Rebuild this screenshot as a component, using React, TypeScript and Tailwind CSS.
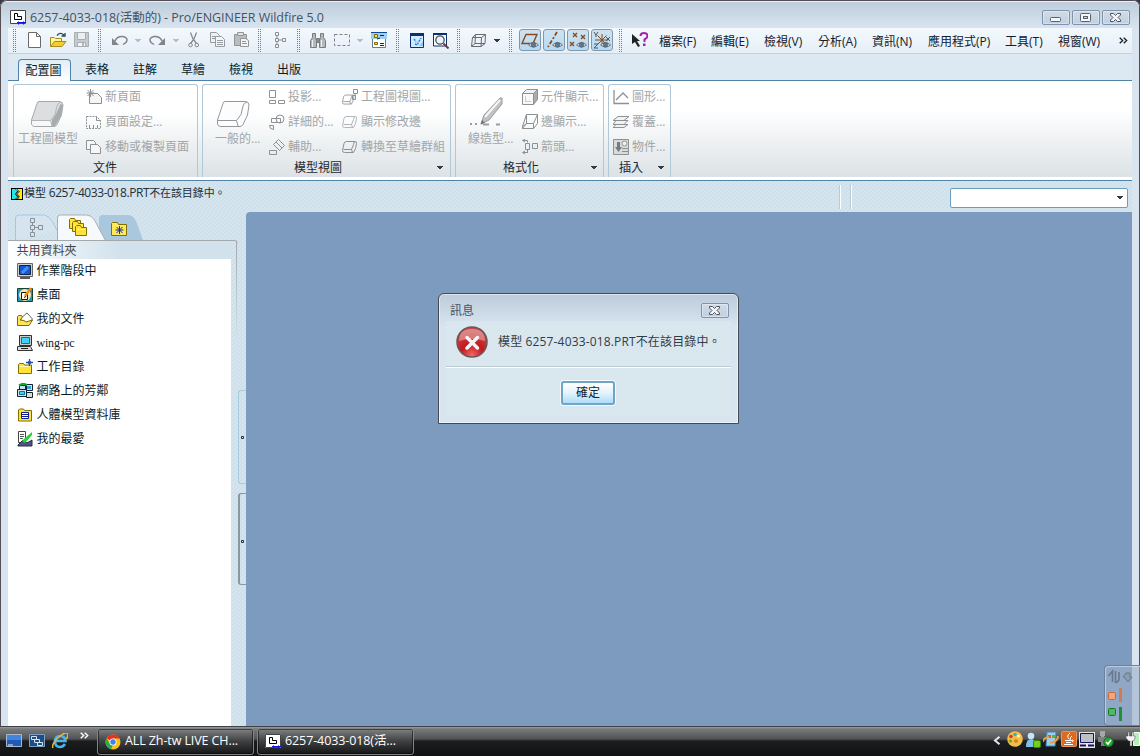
import type { ReactNode } from "react";

type SvgProps = { w?: number; h?: number; children: ReactNode; stroke?: string; smooth?: boolean; className?: string };

function Svg({ w = 16, h = 16, children, stroke = "#8d9193", smooth, className = "" }: SvgProps) {
  return (
    <svg
      width={w}
      height={h}
      viewBox={`0 0 ${w} ${h}`}
      fill="none"
      stroke={stroke}
      shapeRendering={smooth ? "auto" : "crispEdges"}
      className={`shrink-0 ${className}`}
    >
      {children}
    </svg>
  );
}

const hatch = "bg-[repeating-linear-gradient(135deg,#cddfea_0px,#cddfea_1.6px,#d7e5ee_1.6px,#d7e5ee_2.83px)]";

function Grip() {
  return (
    <Svg w={3} h={24} stroke="none">
      {Array.from({ length: 12 }, (_, i) => (
        <g key={i} fill="#5587ab">
          <rect x="0" y={i * 2} width="1" height="1" />
          <rect x="2" y={i * 2} width="1" height="1" />
        </g>
      ))}
    </Svg>
  );
}

function Arrow({ color = "#303a44" }: { color?: string }) {
  return (
    <Svg w={7} h={4} stroke="none">
      <path d="M0 0h6v1h-1v1h-1v1h-2v-1h-1v-1h-1z" fill={color} />
    </Svg>
  );
}

function Slot({ w, children }: { w: string; children: ReactNode }) {
  return <div className={`flex h-full shrink-0 items-center whitespace-nowrap ${w}`}>{children}</div>;
}

function Eye() {
  return (
    <g>
      <path d="M7.500 14q5-5 10 0q-5 4-10 0z" fill="#e8eef2" stroke="#777" strokeWidth="1" />
      <circle cx="12.500" cy="13.800" r="2.400" fill="#55789c" stroke="#555" strokeWidth=".6" />
    </g>
  );
}

function Toggle({ children, last }: { children: ReactNode; last?: boolean }) {
  return (
    <div className={`flex h-full shrink-0 items-start pt-px ${last ? "w-[28px]" : "w-[24px]"}`}>
      <div className="flex h-[22px] w-[22px] items-center justify-center rounded-[3px] border border-[#7f98ad] bg-linear-to-b from-[#cfe3f1] to-[#b4daf4]">
        <Svg w={18} h={18} stroke="#8c4a1c" smooth>
          {children}
          <Eye />
        </Svg>
      </div>
    </div>
  );
}

const menus: [string, string][] = [
  ["檔案(F)", "w-[52px]"],
  ["編輯(E)", "w-[53px]"],
  ["檢視(V)", "w-[54px]"],
  ["分析(A)", "w-[54px]"],
  ["資訊(N)", "w-[56px]"],
  ["應用程式(P)", "w-[77px]"],
  ["工具(T)", "w-[53px]"],
  ["視窗(W)", "w-[61px]"],
];

function AppLogo() {
  return (
    <Svg stroke="none" smooth>
      <rect width="16" height="14" fill="#fff" />
      <path d="M.5.5h15v13H.5z" stroke="#444" />
      <path d="M4.500 3.500h3v3h4v3h-7z" stroke="#000" />
      <path d="M7 12.500h9M8.500 11.500v3M13.500 11.500v3" stroke="#1414e0" />
    </Svg>
  );
}

function WinButton({ children }: { children: ReactNode }) {
  return (
    <div className="flex h-[15px] w-[28px] items-center justify-center rounded-[2px] border border-[#7f93ab] bg-linear-to-b from-[#d0dbe7] to-[#c1cfdf] shadow-[inset_0_0_0_1px_rgba(255,255,255,0.35)]">
      {children}
    </div>
  );
}

function CloseGlyph() {
  return (
    <Svg w={11} h={9} smooth stroke="none" className="-ml-px">
      <path d="M.5.5h3l2 2 2-2h3v1.500L8 4.500l2.500 2.500v1.500h-3l-2-2-2 2h-3V7L3 4.500.5 2z" fill="#f2f4f6" stroke="#4d5563" />
    </Svg>
  );
}

function TitleBar() {
  return (
    <div className="flex h-[28px] shrink-0 items-center bg-linear-to-b from-[#bccbdb] to-[#d8e4f0] pr-[10px] pl-[10px]">
      <div className="mt-[7px]">
        <AppLogo />
      </div>
      <div className="mt-[8px] ml-[4px] flex-1 text-[12.5px] leading-none tracking-[-0.04px] whitespace-nowrap text-[#46525f]">
        6257-4033-018(活動的) - Pro/ENGINEER Wildfire 5.0
      </div>
      <div className="mt-[6px] flex gap-[2px]">
        <WinButton>
          <Svg w={12} h={5} smooth className="mt-[5px] -ml-px">
            <rect x=".5" y=".5" width="10" height="4" rx="1" fill="#f4f6f8" stroke="#5a6270" />
          </Svg>
        </WinButton>
        <WinButton>
          <Svg w={12} h={9} stroke="#5a6270" smooth className="-ml-px">
            <rect x=".5" y=".5" width="10" height="8" rx="1" fill="#f4f6f8" />
            <rect x="3.500" y="3.500" width="4" height="2" fill="#c4d0de" />
          </Svg>
        </WinButton>
        <WinButton>
          <CloseGlyph />
        </WinButton>
      </div>
    </div>
  );
}

function Toolbar() {
  return (
    <div className="flex h-[26px] shrink-0 items-center border-b border-[#c3d2df] bg-linear-to-b from-[#f3f9fd] to-[#e6eef6] pl-[5px] text-[12px] text-[#10202c]">
      <Slot w="w-[15px]"><Grip /></Slot>
      <Slot w="w-[22px]">
        <Svg w={13} h={16} stroke="#6b6b6b" smooth className="-mt-px"><path d="M.5.5h8l4 4v11H.5zM8.500.5v4h4" fill="#fff" /></Svg>
      </Slot>
      <Slot w="w-[24px]">
        <Svg w={17} h={16} stroke="#a58c1e" smooth className="-mt-px">
          <path d="M.5 14.500v-9h4l1 1h6v3" fill="#fff3a0" />
          <path d="M.5 14.500l4-5h11.500l-4 5z" fill="#f6cf2e" />
          <path d="M7 3.500q3-4 7-.5M15 1v3h-3.500" stroke="#28445a" strokeWidth="1.300" />
        </Svg>
      </Slot>
      <Slot w="w-[24px]">
        <Svg stroke="#a8adb1" smooth className="-mt-px"><path d="M.5.5h14v14h-14z" fill="#c5cacd" /><path d="M3.500.5h8v7h-8z" fill="#eceff1" /><path d="M3.500 10.500h8v4h-8z" fill="#f5f6f7" /><path d="M8 11h2v3H8z" fill="#b4b8bb" stroke="none" /></Svg>
      </Slot>
      <Slot w="w-[14px]"><Grip /></Slot>
      <Slot w="w-[23px]">
        <Svg smooth stroke="#7f8487" className="-mt-px"><path d="M3 9q2-5 8-4.500q6 1.500 3 6l-3 2" strokeWidth="1.500" /><path d="M0 6v7h7z" fill="#7f8487" stroke="none" /></Svg>
      </Slot>
      <Slot w="w-[14px]"><Arrow color="#b8bec2" /></Slot>
      <Slot w="w-[24px]">
        <Svg smooth stroke="#7f8487" className="-mt-px"><path d="M13 9q-2-5-8-4.500q-6 1.500-3 6l3 2" strokeWidth="1.500" /><path d="M16 6v7H9z" fill="#7f8487" stroke="none" /></Svg>
      </Slot>
      <Slot w="w-[15px]"><Arrow color="#b8bec2" /></Slot>
      <Slot w="w-[22px]">
        <Svg w={12} smooth stroke="#85898c" className="-mt-px"><path d="M2.500.5L5 7l3.500 4.500M8.500.5L6 7l-3.500 4.500" strokeWidth="1.300" /><circle cx="2.500" cy="13" r="1.800" /><circle cx="8.800" cy="13" r="1.800" /></Svg>
      </Slot>
      <Slot w="w-[24px]">
        <Svg stroke="#969b9e" smooth className="-mt-px"><path d="M.5.5h6l3 3v7h-9z" fill="#eef0f1" /><path d="M2 4.500h5M2 6.500h5" /><path d="M5.500 4.500h6l3 3v7h-9z" fill="#f4f5f6" /><path d="M7 8.500h6M7 10.500h6M7 12.500h6" /></Svg>
      </Slot>
      <Slot w="w-[24px]">
        <Svg stroke="#909598" smooth className="-mt-px"><path d="M.5 2.500h12v11H.5z" fill="#b9bdbf" /><path d="M3.500.5h6v3h-6z" fill="#dfe1e2" /><path d="M6.500 6.500h5l3 2v6h-8z" fill="#f4f5f6" /><path d="M8 9.500h4M8 11.500h5" /></Svg>
      </Slot>
      <Slot w="w-[16px]"><Grip /></Slot>
      <Slot w="w-[23px]">
        <Svg w={13} stroke="#8b9093" smooth className="-mt-[2px]"><path d="M1.500.5h3v3h-3zM1.500 6.500h3v3h-3zM8.500 6.500h3v3h-3zM1.500 12.500h3v3h-3zM3 4v2M3 10v2M5 8h3" /></Svg>
      </Slot>
      <Slot w="w-[13px]"><Grip /></Slot>
      <Slot w="w-[24px]">
        <Svg stroke="#777c7f" smooth><path d="M2.500.5h3v4l1 3v7h-6v-7l2-3zM10.500.5h3v4l2 3v7h-6v-7l1-3z" fill="#b4b9bc" /><path d="M6.500 5.500h3v4h-3z" fill="#8a8f92" /><path d="M2.500 7v7M11.500 7v7" stroke="#eef0f1" /></Svg>
      </Slot>
      <Slot w="w-[23px]">
        <Svg h={12} stroke="#7d8285" smooth className="-mt-[2px]"><path d="M.5.5h15v11H.5z" strokeDasharray="3 2" /></Svg>
      </Slot>
      <Slot w="w-[14px]"><Arrow color="#b8bec2" /></Slot>
      <Slot w="w-[25px]">
        <Svg stroke="#6d7d8c" smooth className="-mt-[2px]"><path d="M1.500.5h13v15h-13z" fill="#fff" /><path d="M0 1h16v6H0z" fill="#9cd0f2" stroke="none" /><path d="M0 .5h16" stroke="#12489a" /><path d="M3.500 2.500h3v3h-3zM3.500 10.500h3v2h-3z" fill="#ffe83a" stroke="#7a6a00" /><path d="M9 3.500h4M6 7l3-1M9 11.500h4M9 13.500h4" stroke="#222" /></Svg>
      </Slot>
      <Slot w="w-[14px]"><Grip /></Slot>
      <Slot w="w-[23px]">
        <Svg w={15} h={15} stroke="#0b2f73" smooth><path d="M.5.500h13v14H.5z" fill="#d3eaff" /><path d="M0 1.500h14" strokeWidth="3" /><path d="M10 12l3-4v5H9z" fill="#8cc4f4" stroke="none" /><path d="M5 11l2 1 4-7M4 6l2 3" stroke="#1c86d8" strokeWidth="1.500" strokeDasharray="2 1" /></Svg>
      </Slot>
      <Slot w="w-[24px]">
        <Svg smooth stroke="#0b2f73"><path d="M.5 1h13v12H.500z" fill="#fff" /><path d="M0 1h14" strokeWidth="2" /><circle cx="7" cy="7" r="4.200" fill="#e9f3f9" stroke="#48525a" strokeWidth="1.300" /><path d="M10.500 10.500l5 5" stroke="#7b3c28" strokeWidth="2" /></Svg>
      </Slot>
      <Slot w="w-[14px]"><Grip /></Slot>
      <Slot w="w-[23px]">
        <Svg h={14} w={15} smooth stroke="#666b6f"><path d="M1.500 3.500h9l-.5 9H.5zM4.500.5h10l-.5 9H4zM1.500 3.500l3-3M10.500 3.500l4-3M.5 12.500l3.500-3M10 12.500l4-3" /></Svg>
      </Slot>
      <Slot w="w-[15px]"><Arrow /></Slot>
      <Slot w="w-[10px]"><Grip /></Slot>
      <Toggle><path d="M5 3.500h11l-4 9H1z" strokeWidth="1.400" /></Toggle>
      <Toggle><path d="M12 1L3 16" strokeWidth="1.800" strokeDasharray="4 2 2 2" /></Toggle>
      <Toggle><path d="M4 2l4 4M8 2L4 6M12 4l4 4M16 4l-4 4M1 11l4 4M5 11l-4 4" strokeWidth="1.400" /></Toggle>
      <Toggle last><path d="M2 9h13M9 3v11M4.500 4.500l9 9M13.500 4.500l-9 9" /><path d="M1 1l2 3 2-3M3 4v2M13 6l4 4M17 6l-4 4M1 13h4l-4 4h4" stroke="#555" /></Toggle>
      <Slot w="w-[13px]"><Grip /></Slot>
      <Slot w="w-[27px]">
        <Svg smooth stroke="none" className="-mt-[2px]"><path d="M0 2l8 7H5l3 5-2 1-3-5-3 2z" fill="#222" /><path d="M8.500 4q0-3 3.500-3t3.500 3q0 2-3 3.500v2.500" stroke="#a322ac" strokeWidth="2" /><rect x="11" y="11.500" width="2.500" height="2.500" fill="#a322ac" /></Svg>
      </Slot>
      {menus.map(([label, w]) => (
        <Slot key={label} w={w}>
          <span className="pt-[3px]">{label}</span>
        </Slot>
      ))}
      <Svg w={9} h={7} smooth stroke="#14202a"><path d="M.7.700l3 2.800-3 2.800M4.700.7l3 2.800-3 2.800" strokeWidth="1.300" /></Svg>
    </div>
  );
}

function RibbonTabs() {
  return (
    <div className="flex h-[27px] shrink-0 items-end border-b border-[#4f82a8] bg-[#dce9f3] pl-[10px] text-[12px] leading-none whitespace-nowrap text-[#0b1c28]">
      <div className="-mb-px flex h-[22px] w-[53px] items-center justify-center rounded-t-[4px] border border-b-0 border-[#4f82a8] bg-linear-to-b from-[#e1edf5] to-white pr-[2px]">配置圖</div>
      <div className="flex h-[21px] items-center gap-[24px] pl-[14px]">
        {["表格", "註解", "草繪", "檢視", "出版"].map((t) => (
          <span key={t}>{t}</span>
        ))}
      </div>
    </div>
  );
}

function Solid({ filled }: { filled?: boolean }) {
  return (
    <Svg w={34} h={30} smooth stroke={filled ? "#a6a9ab" : "#94989b"}>
      <path d="M8 2.500H28q4 0 4 3.500L30.500 16 26 25.500q-1 2-3 2H4q-3 0-3.500-2.500v-4L6 4.500q.5-2 2-2z" fill={filled ? "#dcdedf" : "#fdfdfd"} />
      {filled && <path d="M29.500 5l2.500 1-1.500 10L24 27h-3v-6l4-6z" fill="#a9acae" stroke="none" />}
      {filled && <path d="M1 21.500h19v5.500H4q-2.500 0-3-2z" fill="#f8f8f8" stroke="none" />}
      <path d="M1 21.500h18.500L24 15.500 26 7q.5-3 4-4M19.500 21.500l1.500 5.500" stroke={filled ? "#b4b7b9" : "#94989b"} />
    </Svg>
  );
}

function Command({ icon, label }: { icon: ReactNode; label: string }) {
  return (
    <div className="flex h-[25px] items-center">
      <div className="flex w-[20px] shrink-0">{icon}</div>
      <span className="-ml-px whitespace-nowrap">{label}</span>
    </div>
  );
}

function Commands({ children, className = "" }: { children: ReactNode; className?: string }) {
  return <div className={`-mt-px flex flex-col ${className}`}>{children}</div>;
}

type GroupProps = { w: string; title: string; titlePad: string; arrow?: string; children: ReactNode };

function Group({ w, title, titlePad, arrow, children }: GroupProps) {
  return (
    <div className={`flex h-[93px] shrink-0 flex-col rounded-t-[3px] border-x border-t border-[#b0c8d8] bg-linear-to-b from-white from-30% to-[#dce2e5] ${w}`}>
      <div className="flex h-[74px] items-start text-[#a1a6a9]">{children}</div>
      <div className={`flex h-[17px] items-center leading-none text-[#1c2730] ${titlePad}`}>
        <span className="whitespace-nowrap">{title}</span>
        {arrow && <span className={arrow}><Arrow /></span>}
      </div>
    </div>
  );
}

const page = <path d="M3.500 4.500h8l4 4v6h-12z" fill="#f6f6f6" />;
const smallBox = <path d="M4.500 2.500h8.500q2 0 1.500 2l-1 5-2 4h-9q-2 0-2-2l1.500-7q.5-2 2.500-2zM1.500 10.500h8l2-5 1-3M9.500 10.500l1 3" />;

function Ribbon() {
  return (
    <div className="flex h-[100px] shrink-0 border-b border-[#4f82a8] bg-white text-[12px] leading-none">
      <div className="flex h-[96px] w-full gap-[4px] bg-linear-to-b from-white from-30% to-[#dce2e5] pt-[3px] pl-[5px]">
        <Group w="w-[185px]" title="文件" titlePad="pl-[79px]">
          <div className="flex w-[72px] flex-col items-start pt-[14px] pl-[4px]">
            <span className="pl-[13px]"><Solid filled /></span>
            <span className="mt-[4px] whitespace-nowrap">工程圖模型</span>
          </div>
          <Commands>
            <Command label="新頁面" icon={<Svg smooth>{page}<path d="M4.500 0v8M.500 4h8M1.500 1l6 6M7.500 1l-6 6" /></Svg>} />
            <Command label="頁面設定..." icon={<Svg smooth><path d="M.5 2.500h10l4 4v8H.5z" strokeDasharray="2 1" /><path d="M10.500 2.500v4h4M3.500 14v-3M7.500 14v-3M11.500 14v-3" /></Svg>} />
            <Command label="移動或複製頁面" icon={<Svg smooth><path d="M.5 1.500h7l2 2v7h-9z" fill="#f6f6f6" /><path d="M4.500 5.500h7l3 3v6h-10z" fill="#f6f6f6" /></Svg>} />
          </Commands>
        </Group>
        <Group w="w-[249px]" title="模型視圖" titlePad="pl-[91px]" arrow="ml-[95px]">
          <div className="flex w-[66px] flex-col items-start pt-[14px] pl-[12px]">
            <span className="pl-[2px]"><Solid /></span>
            <span className="mt-[4px] whitespace-nowrap">一般的...</span>
          </div>
          <Commands className="w-[73px]">
            <Command label="投影..." icon={<Svg smooth><path d="M.5 1.500h6v7h-6zM.5 11.500h6v3h-6zM9.500 11.500h6v3h-6z" /></Svg>} />
            <Command label="詳細的..." icon={<Svg smooth><circle cx="11" cy="5" r="4" /><path d="M2.500 4.500h9v4h-9zM.5 11.500h4v4q-4 0-4-4z" /></Svg>} />
            <Command label="輔助..." icon={<Svg smooth><path d="M9.500.5l6 6-5 5-6-6zM7 3l6 6M.5 11.500h7v4h-7z" /></Svg>} />
          </Commands>
          <Commands>
            <Command label="工程圖視圖..." icon={<Svg smooth><g transform="translate(0 4) scale(.82)">{smallBox}</g><path d="M11.500.5h4v4h-4zM10.500 6.500h3v4h-3zM13 5v2" /></Svg>} />
            <Command label="顯示修改邊" icon={<Svg smooth stroke="#b4b8ba">{smallBox}</Svg>} />
            <Command label="轉換至草繪群組" icon={<Svg smooth>{smallBox}</Svg>} />
          </Commands>
        </Group>
        <Group w="w-[149px]" title="格式化" titlePad="pl-[47px]" arrow="ml-[52px]">
          <div className="flex w-[66px] flex-col items-start pt-[11px] pl-[12px]">
            <Svg w={36} h={33} smooth stroke="none">
              <path d="M32 2h2v6L21 24l-8 4 3-9z" fill="#bfc2c3" stroke="#9a9d9f" />
              <path d="M32 4L17 21" stroke="#f5f5f5" strokeWidth="2" />
              <path d="M12.500 28.500l1.500-4.500 3 3z" fill="#6f7375" />
              <path d="M2 28h2M7 28h2M15 28.500h6M28 28.500h4" stroke="#999da0" strokeWidth="2" />
            </Svg>
            <span className="mt-[4px] whitespace-nowrap">線造型...</span>
          </div>
          <Commands>
            <Command label="元件顯示..." icon={<Svg smooth><path d="M.5 4.500l4-4h11l-4 4z" fill="#f0f1f1" /><path d="M11.500 4.500l4-4v10l-4 5z" fill="#a9adaf" /><path d="M.5 4.500h11v11H.5z" fill="#f8f8f8" /><path d="M3.500 7v6M3 12.500h6" stroke="#c9cccd" /></Svg>} />
            <Command label="邊顯示..." icon={<Svg smooth><path d="M4.500.5h11v9l-4 5H.5v-2zM4.500.5v9h7l4-9M4.500 9.500l-4 5M11.500 9.500v5M.5 12.500l4-3" /></Svg>} />
            <Command label="箭頭..." icon={<Svg smooth><path d="M1 1.500h4.500M1 13.500h4.500M5.500 1.500v2M5.500 11v3M3 0L.5 1.500 3 3M3 12L.5 13.500 3 15M3.500 4.500h4v6h-4zM10.500 4.500h5v5h-5z" /></Svg>} />
          </Commands>
        </Group>
        <Group w="w-[63px]" title="插入" titlePad="pl-[10px]" arrow="ml-[15px]">
          <Commands className="pl-[4px]">
            <Command label="圖形..." icon={<Svg smooth><path d="M1 1v13.500h15M3 11l7-7 5 5" strokeWidth="1.300" /></Svg>} />
            <Command label="覆蓋..." icon={<Svg smooth><path d="M5 2.500h11l-5 4H0zM3 6.500h12l-4 4H0zM3 10.500h12l-4 3H0z" fill="#f1f2f2" /></Svg>} />
            <Command label="物件..." icon={<Svg smooth><path d="M.5.5h15v15H.5z" fill="#d8dadb" /><path d="M4 3h3v5h2l-3.500 5L2 8h2z" fill="#777b7e" stroke="none" /><circle cx="11.500" cy="4.500" r="2.500" fill="#f1f1f1" /><path d="M9 9.500h6M9 12.500h6" /></Svg>} />
          </Commands>
        </Group>
      </div>
    </div>
  );
}

function MessageBar() {
  return (
    <div className={`flex h-[31px] shrink-0 items-start pr-[4px] pl-[3px] ${hatch}`}>
      <Svg w={12} h={12} smooth stroke="none" className="mt-[7px]">
        <rect width="12" height="12" fill="#000" />
        <path d="M1 1h3l2.500 2L4 6l2.500 3L4 11H1z" fill="#22e8e8" />
        <path d="M6 1h5v10H7l2-2.500L6.500 6 9 3.500z" fill="#fff200" />
        <path d="M5 1l3 2.500L5.500 6 8 8.500 5.500 11" stroke="#fff" strokeWidth=".7" />
      </Svg>
      <span className="mt-[6px] ml-px w-[815px] text-[11px] leading-none whitespace-nowrap text-[#23303a]">
        模型<span className="text-[12px] tracking-[-0.42px]"> 6257-4033-018.PRT</span><span className="tracking-[-0.1px]">不在該目錄中。</span>
      </span>
      <span className="mt-[4px] h-[24px] w-[2px] border-r border-l border-r-white border-l-[#b9cbd8]" />
      <span className="mt-[4px] ml-[9px] h-[24px] w-[2px] border-r border-l border-r-white border-l-[#b9cbd8]" />
      <div className="mt-[7px] ml-auto flex h-[20px] w-[178px] items-center justify-end rounded-[2px] border border-[#6b9fbf] bg-white pr-[3px]">
        <Arrow />
      </div>
    </div>
  );
}

function Folder({ x = 0, y = 0 }: { x?: number; y?: number }) {
  return (
    <g transform={`translate(${x} ${y})`}>
      <path d="M.5 10.500v-9l1-1h4l1 2h5v8z" fill="#ffe33a" stroke="#827000" />
      <path d="M2 4.500h8" stroke="#fff7b8" />
    </g>
  );
}

const places: [string, ReactNode][] = [
  ["作業階段中", <><path d="M.5.5h15v13H.5z" fill="#d4d2cc" stroke="#666" /><path d="M2.500 2.500h11v9h-11z" fill="#1558d8" stroke="#124" /><path d="M5 10l6-6" stroke="#3f92ff" strokeWidth="3" /><path d="M3 15h10" stroke="#222" strokeWidth="1.500" /></>],
  ["桌面", <><path d="M.5 1.500h15v13H.5z" fill="#2b94b4" stroke="#143" /><circle cx="8" cy="8" r="6" fill="#f5e7b0" /><path d="M4.500 5.500h6v7h-6z" fill="#fffbe6" stroke="#111" /><path d="M8 9l6-8" stroke="#f08b18" strokeWidth="2.500" /><path d="M7 10.500l2-1" stroke="#111" /></>],
  ["我的文件", <><path d="M3 8l7-6 5.500 6-5 5z" fill="#fff" stroke="#666" /><path d="M.5 14.500V5.500l1-1h3l1 1.500L3 9l4 .5 2 1.500 6.500-2-3.500 5.500z" fill="#ffe45a" stroke="#7c6b00" /></>],
  ["wing-pc", <><path d="M2.500.5h12v10h-12z" fill="#ccc" stroke="#234" /><path d="M4.500 2.500h8v6h-8z" fill="#3fd3fa" stroke="#079" /><path d="M.5 11.500h13l2 4H.5z" fill="#ddd" stroke="#333" /><path d="M4 13.500h7" stroke="#222" /></>],
  ["工作目錄", <><path d="M1.500 14.500v-9l1-1h4l1 1.500h7v8.500z" fill="#ffe33a" stroke="#827000" /><path d="M3 7.500h9" stroke="#fff7b8" /><path d="M12.500 0v7M9 3.500h7" stroke="#1753bd" strokeWidth="1.300" /><circle cx="12.500" cy="3.500" r="1.700" fill="#1753bd" /></>],
  ["網路上的芳鄰", <><path d="M2.500 2.500h7v6h-7zM8.500 1.500h7v6h-7z" fill="#bfe7f8" stroke="#123" /><path d="M10 3h4v3h-4z" fill="#3fa0e0" /><path d="M.5 6.500h9v7h-9zM9.500 9.500h6v5h-6z" fill="#ddd" stroke="#123" /><path d="M2.500 8.500h5v3h-5z" fill="#3fd3fa" stroke="#079" /><path d="M2 2.500l4-2 4 1.500" stroke="#10a030" strokeWidth="2" /></>],
  ["人體模型資料庫", <><path d="M1.500 14v-11l1-1h4l1 1.500h7V14z" fill="#ffe33a" stroke="#827000" /><path d="M4.500 5.500h7v6h-7z" fill="#fff" stroke="#0a1c9a" /><path d="M5 7.500h6M5 9.500h6" stroke="#0a1c9a" /></>],
  ["我的最愛", <><path d="M1.500.5h7v11h-7z" fill="#fff" stroke="#444" /><path d="M3 3.500h4M3 5.500h4M3 7.500h3" stroke="#555" /><path d="M1 14l5-5 4 3 5-3v6H1z" fill="#5b4a98" stroke="#233" /><path d="M5 10l3 2L15 4V1L8 7z" fill="#21d534" /></>],
];

function TreeTabs() {
  return (
    <Svg w={230} h={28} smooth>
      <path d="M91 28V6q0-3 4-3h25q5 0 8 6l7 19z" fill="#a9c8dd" stroke="none" />
      <path d="M7.500 28V6q0-3 3-3h26q5 1 8 7l5 9" fill="#d5e4ee" stroke="#a5c7dc" />
      <path d="M49.500 28.500V6q0-3 3-3h26q5 0 8 5l11 20.500z" fill="#f7fafc" stroke="#a9adaf" />
      <path d="M22.500 6.500h4v4h-4zM22.500 13.500h4v4h-4zM30.500 13.500h4v4h-4zM22.500 20.500h4v4h-4zM24.500 11v2M24.500 18v2M27 15.500h3" stroke="#8a9196" />
      <Folder x={61} y={6} />
      <Folder x={64} y={9} />
      <Folder x={67} y={13} />
      <g transform="translate(103 9)">
        <path d="M.5 14.500v-12l1-1h5l1 2h8v11z" fill="#ffe85a" stroke="#827000" />
        <path d="M8.500 5v8M4.500 9h8M5.500 6l6 6M11.500 6l-6 6" stroke="#0a2fa8" />
      </g>
    </Svg>
  );
}

function Sidebar() {
  return (
    <div className="flex w-[230px] shrink-0 flex-col">
      <TreeTabs />
      <div className="flex min-h-0 flex-1 flex-col rounded-tr-[4px] border-t border-[#a3a8ab]">
        <div className="flex min-h-0 flex-1">
          <div className="flex w-[223px] flex-col">
            <div className="flex h-[18px] shrink-0 items-center bg-linear-to-r from-white to-[#d2e2ec] to-50% pt-px pl-[8.5px] text-[12px] leading-none text-[#3a464e]">共用資料夾</div>
            <div className="flex flex-1 flex-col bg-white text-[12px] leading-none text-[#0b1b26]">
              {places.map(([label, icon]) => (
                <div key={label} className="flex h-[24px] shrink-0 items-center gap-[3.5px] pl-[9px]">
                  <Svg stroke="none" smooth>{icon}</Svg>
                  <span className={label === "wing-pc" ? "font-['Liberation_Serif',serif] tracking-[-0.2px]" : ""}>{label}</span>
                </div>
              ))}
            </div>
          </div>
          <div className="ml-[5px] h-[100px] w-px bg-linear-to-b from-[#a3a8ab] to-transparent" />
        </div>
      </div>
    </div>
  );
}

function Dot() {
  return (
    <Svg w={3} h={3} stroke="#26323a" smooth>
      <path d="M.5.5h2v2h-2z" />
    </Svg>
  );
}

function Dialog() {
  return (
    <div className="absolute top-[81px] left-[192px] flex h-[131px] w-[301px] flex-col rounded-t-[6px] border border-[#454b52] bg-linear-to-b from-[#bccbdb] to-[#d8e4f0] to-25% shadow-[inset_0_0_0_1px_rgba(255,255,255,0.5)]">
      <div className="flex h-[27px] shrink-0 items-center justify-between pt-[6px] pr-[9px] pl-[11px] text-[12px] leading-none text-[#46525f]">
        <span className="pt-px">訊息</span>
        <WinButton><CloseGlyph /></WinButton>
      </div>
      <div className="mx-[7px] flex h-[95px] flex-col bg-[repeating-linear-gradient(135deg,#d6e4ed_0px,#d6e4ed_1.6px,#dce9ef_1.6px,#dce9ef_2.83px)]">
        <div className="flex h-[46px] items-start border-b border-[#bccad3] pt-[5px] pl-[9px]">
          <Svg w={34} h={34} smooth stroke="none">
            <defs>
              <radialGradient id="alert" cx="50%" cy="95%" r="85%">
                <stop offset="0" stopColor="#f26a6a" />
                <stop offset=".45" stopColor="#c3191e" />
                <stop offset="1" stopColor="#c84a4a" />
              </radialGradient>
            </defs>
            <circle cx="17" cy="16" r="15" fill="url(#alert)" stroke="#6e5457" strokeWidth="1.500" />
            <path d="M4 15Q4 3 17 3t13 12q-13-4-26 0z" fill="#fff" opacity=".35" />
            <path d="M12 11.500l10.500 10.500M22.500 11.500l-10.500 10.500" stroke="#f4f4f4" strokeWidth="3.500" strokeLinecap="round" />
          </Svg>
          <span className="mt-[10px] ml-[9px] text-[12px] leading-none tracking-[0.15px] whitespace-nowrap text-[#303c46]">模型 6257-4033-018.PRT不在該目錄中。</span>
        </div>
        <div className="flex flex-1 justify-center border-t border-white pt-[13px] pr-[2px]">
          <div className="flex h-[24px] w-[54px] items-center justify-center rounded-[3px] border-2 border-[#70a5c3] bg-linear-to-b from-white via-[#e4f3fc] to-[#addcfa] pl-px text-[12px] leading-none text-[#0c2534] shadow-[0_0_0_1px_#f4f9fc]">確定</div>
        </div>
      </div>
    </div>
  );
}

function MeterGadget() {
  return (
    <div className="absolute right-[-8px] bottom-0 h-[61px] w-[36px] rounded-l-[4px] border border-r-0 border-[#68829f] bg-[#9cb1cb]/60 shadow-[inset_1px_1px_0_rgba(255,255,255,0.4)]">
      <Svg w={34} h={60} smooth stroke="#66788c">
        <path d="M3.500 10l4-5v11M10.500 17V5M14 6v8l-3 3" strokeWidth="1.600" />
        <path d="M18 11l3-4h4v4h2l-4 5-4-5z" fill="#8b9caf" />
        <rect x="3.500" y="26.500" width="7" height="7" rx="1" fill="#f5a37c" stroke="#c8683b" />
        <path d="M15.500 22v14" stroke="#d07c4e" strokeWidth="3" />
        <rect x="3.500" y="42.500" width="7" height="7" rx="1" fill="#4dba61" stroke="#127a2b" />
        <path d="M15.500 41v14" stroke="#1d8f36" strokeWidth="3" />
      </Svg>
    </div>
  );
}

function TaskButton({ icon, label }: { icon: ReactNode; label: string }) {
  return (
    <div className="flex h-[27px] w-[157px] shrink-0 items-center gap-[4px] rounded-[3px] border border-[#818385] bg-linear-to-b from-[#808284] via-[#3d3f41] via-50% to-[#151719] pl-[7px] text-[12.5px] leading-none whitespace-nowrap text-white shadow-[inset_0_0_0_1px_rgba(0,0,0,0.5)]">
      {icon}
      <span className="tracking-[-0.1px]">{label}</span>
    </div>
  );
}

function Taskbar() {
  return (
    <div className="flex h-[30px] shrink-0 items-start border-t border-[#3d4246] bg-[linear-gradient(#9a9c9e_0px,#77797b_2px,#505254_12px,#1b1d1f_14px,#101214_29px)] pl-[6px]">
      <div className="flex h-[28px] w-[91px] items-center">
        <Slot w="w-[23px]"><Svg h={14} smooth stroke="#a9bccd"><path d="M.5.5h15v12H.5z" fill="#225bb7" /><path d="M1 1h14v5H1z" fill="#3d86dc" stroke="none" /><path d="M2 11h5" stroke="#eee" /></Svg></Slot>
        <Slot w="w-[23px]"><Svg h={14} smooth stroke="#d7e4ef"><path d="M.5.5h15v12H.5z" fill="#1e4c85" stroke="#7ba0c4" /><path d="M2.500 2.500h5v3h-5zM5.500 5.500h5v3h-5zM8.500 8.500h5v3h-5z" fill="#284e7d" /></Svg></Slot>
        <Slot w="w-[28px]"><Svg smooth stroke="#45b4ef"><path d="M13 11q-2 3-5 3-5 0-5-5.500T8 3t5.500 5H4" strokeWidth="2.600" /><path d="M1 15Q-1 11 7 4t9-2q0 2-2 4" stroke="#efb72c" strokeWidth="1.500" /></Svg></Slot>
        <div className="-mt-[12px]"><Svg w={9} h={7} smooth stroke="#fff"><path d="M.7.700l3 2.800-3 2.800M4.700.7l3 2.800-3 2.800" strokeWidth="1.400" /></Svg></div>
      </div>
      <div className="flex gap-[3px] pt-px">
        <TaskButton label="ALL Zh-tw LIVE CH..." icon={
          <Svg smooth stroke="none"><circle cx="8" cy="8" r="7.500" fill="#fbc116" /><path d="M8 8L1.500 4.200A7.500 7.500 0 0 1 14.700 4.500H8z" fill="#df3428" /><path d="M1.500 4.200L5 10l3 1-2 4.300A7.500 7.500 0 0 1 1.500 4.200z" fill="#2fa84c" /><circle cx="8" cy="8" r="3.500" fill="#fff" /><circle cx="8" cy="8" r="2.700" fill="#3d82e6" /></Svg>
        } />
        <TaskButton label="6257-4033-018(活..." icon={<AppLogo />} />
      </div>
      <div className="ml-auto flex h-[26px] w-[147px] items-center">
        <Slot w="w-[14px]"><Svg w={8} h={9} smooth stroke="#e5e5ee"><path d="M6.500.8L2 4.500l4.500 3.700" strokeWidth="2" /></Svg></Slot>
        <Slot w="w-[19px]"><Svg smooth stroke="none" className="-mt-[2px]"><circle cx="8" cy="8" r="7.800" fill="#f3bd4c" /><circle cx="8" cy="3.500" r="1.700" fill="#2eb2c9" /><circle cx="4" cy="5.500" r="1.700" fill="#d83422" /><circle cx="3.500" cy="10" r="1.600" fill="#64a82e" /><circle cx="11.500" cy="5" r="1.500" fill="#fff3bd" /><circle cx="9" cy="10" r="2" fill="#c98b20" /></Svg></Slot>
        <Slot w="w-[17px]"><Svg w={15} smooth stroke="none"><circle cx="5" cy="4" r="3.300" fill="#c6e5f5" /><path d="M0 15q0-8 5-8t5 8z" fill="#7cbfe7" /><rect x="7.500" y="8.500" width="7" height="7" rx="1.500" fill="#72d216" stroke="#38860e" /></Svg></Slot>
        <Slot w="w-[18px]"><Svg smooth stroke="none" className="-mt-[2px]"><path d="M4 1h9l-1 14H3z" fill="#9ccdec" stroke="#3d8bc1" /><rect x="5" y="4" width="3" height="3" fill="#e75b2b" /><rect x="9" y="4" width="3" height="3" fill="#68ae34" /><path d="M0 11q0-4 6-5M15 5q0 6-8 7" stroke="#eaa034" strokeWidth="2" /></Svg></Slot>
        <Slot w="w-[18px]"><Svg smooth stroke="#fff" className="-mt-[2px]"><rect x=".5" y=".5" width="15" height="15" rx="1" fill="#dd6a22" stroke="#e8955c" /><path d="M9 2q-4 3-1 6M11 5q-2 1-2 4M4 9.500h7M5 11.500h5M3 13.500h9M11 9q3 0 0 2" /></Svg></Slot>
        <Slot w="w-[19px]"><Svg smooth stroke="#15155f" className="-mt-px"><path d="M0 0h16v16H0z" fill="#e4e4e4" stroke="none" /><path d="M1.500 1.500h13v9h-13z" fill="#bfc0c4" /><path d="M1 13.500h6M9 13.500h6" strokeWidth="2" /></Svg></Slot>
        <Slot w="w-[28px]"><Svg smooth stroke="none" className="-mt-[2px]"><path d="M2 0h5v5H6v4H3V5H2z" fill="#a5a8aa" /><path d="M0 6h9v5H7v4H3v-4H0z" fill="#7f8284" /><circle cx="10.500" cy="11" r="4.700" fill="#2ba436" stroke="#0b711a" /><path d="M8 11l2 2 3-4" stroke="#fff" strokeWidth="1.500" /></Svg></Slot>
        <Svg w={14} smooth stroke="none" className="-mt-[3px]">
          <path d="M7.500 1.500h6v13h-6z" fill="#b7efb8" stroke="#fff" />
          <path d="M2 1h1.500v4H6V1h1.500v4H9v2L7.500 10H6v5H4v-5H2.500L0 7V5h2z" fill="#f4f4f4" stroke="#444" strokeWidth=".5" />
        </Svg>
      </div>
    </div>
  );
}

export default function App() {
  return (
    <div className="flex h-[756px] w-[1140px] flex-col overflow-hidden bg-[#3b3840] font-['Open_Sans','Noto_Sans_CJK_TC',sans-serif]">
      <div className="flex h-[726px] shrink-0 flex-col overflow-hidden rounded-t-[7px] bg-[#d8e4f0] shadow-[inset_1px_1px_0_#554f55,inset_-1px_0_0_#554f55]">
        <div className="mx-px mt-px -mb-px flex shrink-0 flex-col overflow-hidden rounded-t-[6px] border-t border-[#eaf0f6]">
          <div className="-mx-px -mt-[2px]">
            <TitleBar />
          </div>
        </div>
        <div className="mx-[8px] mt-px flex min-h-0 flex-1 flex-col">
          <Toolbar />
          <RibbonTabs />
          <Ribbon />
          <MessageBar />
          <div className={`flex min-h-0 flex-1 ${hatch}`}>
            <Sidebar />
            <div className="flex w-[8px] shrink-0 flex-col gap-[9px] pt-[178px]">
              <div className="flex h-[94px] w-[8px] items-center rounded-l-[3px] border border-r-0 border-[#a9cbe0] pt-px pl-[2px]"><Dot /></div>
              <div className="flex h-[92px] w-[8px] items-center rounded-l-[3px] border border-r-0 border-l-2 border-[#8b969e] pt-[5px] pl-px"><Dot /></div>
            </div>
            <div className="relative flex-1 rounded-tl-[4px] bg-[#7d9abf]">
              <Dialog />
              <MeterGadget />
            </div>
          </div>
        </div>
      </div>
      <Taskbar />
    </div>
  );
}
